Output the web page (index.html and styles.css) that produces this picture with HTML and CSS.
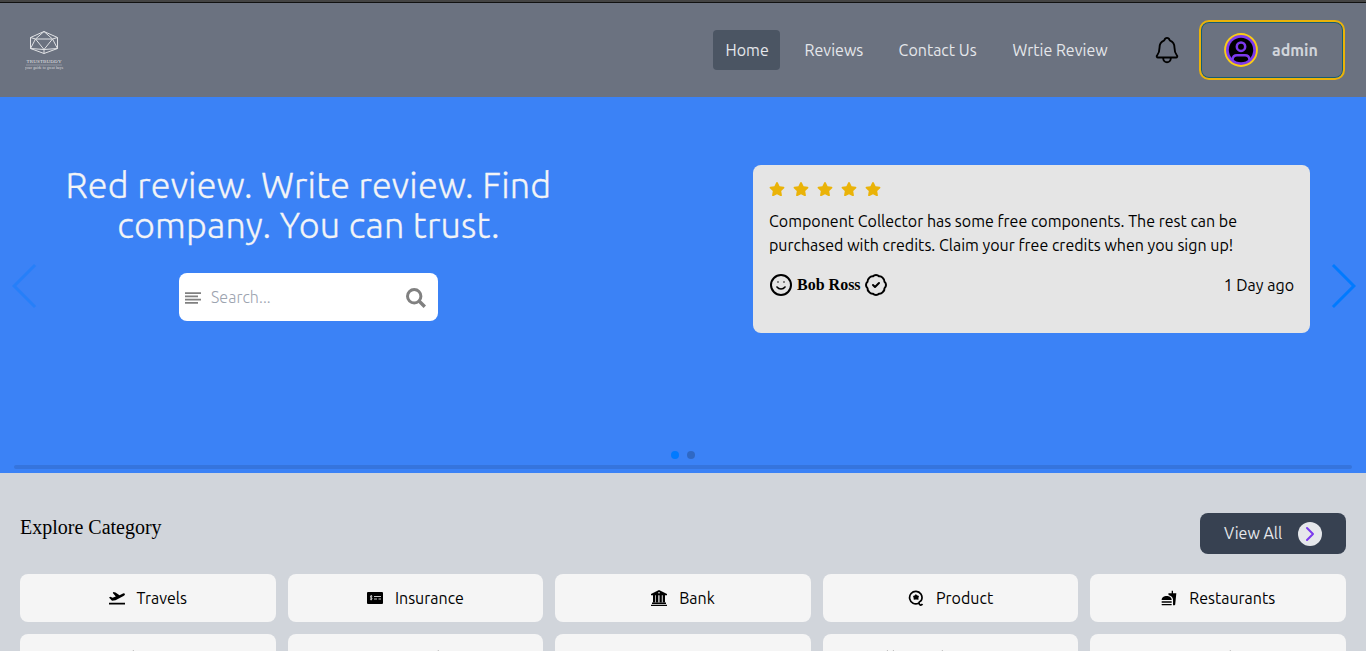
FILE: index.html
```html
<!DOCTYPE html>
<html lang="en">
<head>
<meta charset="utf-8">
<title>Trustbuddy</title>
<link rel="stylesheet" href="styles.css">
</head>
<body>
<header class="header">
  <svg class="logo" viewBox="0 0 40 42" fill="none" stroke="#fff">
    <g stroke-width="1" opacity=".8">
      <path d="M20 2.500L33.500 8.500V19.500L20 24.500L6.500 19.500V8.500Z"/>
      <path d="M11.500 10H28.500L20 20.500ZM20 2.500L11.500 10L6.500 8.500M20 2.500L28.500 10L33.500 8.500M11.500 10L6.500 19.500L20 20.500L33.500 19.500L28.500 10M20 20.500V24.500"/>
    </g>
    <path d="M2 36H38" stroke-width=".5" opacity=".5"/>
    <g fill="#fff" stroke="none" font-family="Liberation Serif, serif" text-anchor="middle" opacity=".8">
      <text class="logo-name" x="20" y="34.300" textLength="35">TRUSTBUDDY</text>
      <text class="logo-tag" x="20" y="39.500" textLength="38">your guide to great buys</text>
    </g>
  </svg>
  <nav class="nav">
    <a class="nav-item active">Home</a>
    <a class="nav-item reviews">Reviews</a>
    <a class="nav-item contact">Contact Us</a>
    <a class="nav-item write">Wrtie Review</a>
  </nav>
  <svg class="bell" viewBox="0 0 512 512" fill="none" stroke="#000" stroke-width="32" stroke-linecap="round" stroke-linejoin="round"><path d="M427.680 351.430C402 320 383.870 304 383.870 217.350 383.870 138 343.350 109.730 310 96c-4.430-1.820-8.600-6-9.950-10.550C294.200 65.540 277.800 48 256 48s-38.210 17.550-44 37.470c-1.350 4.600-5.520 8.710-9.950 10.530-33.390 13.750-73.870 41.920-73.870 121.350C128.130 304 110 320 84.320 351.430 73.680 364.450 83 384 101.610 384h308.880c18.510 0 27.770-19.610 17.190-32.570zM320 384v16a64 64 0 01-128 0v-16"/></svg>
  <button class="user">
    <svg class="avatar" viewBox="0 0 34 34" fill="none">
      <circle cx="17" cy="17" r="16.900" fill="#facc15"/>
      <circle cx="17" cy="17" r="15" fill="#7c3aed"/>
      <circle cx="17" cy="17" r="12.200" fill="#000"/>
      <circle cx="17" cy="13.700" r="4.200" stroke="#7c3aed" stroke-width="2.500"/>
      <path d="M8.500 27.500V26.500Q9 22.200 13 22.200H21Q25 22.200 25.500 26.500V27.500" stroke="#7c3aed" stroke-width="2.500"/>
    </svg>
    <span>admin</span>
  </button>
</header>

<section class="hero">
  <svg class="arrow prev" viewBox="0 0 27 44" fill="#007aff"><path d="M0,22L22,0l2.100,2.100L4.200,22l19.900,19.900L22,44L0,22Z"/></svg>
  <div class="intro">
    <h1>Red review. Write review. Find<br>company. You can trust.</h1>
    <div class="search">
      <svg class="lines" viewBox="0 0 16 12" stroke="#808080" stroke-width="1.700"><path d="M0 1.200H16M0 4.300H13M0 7.700H16M0 10.900H13"/></svg>
      <span class="placeholder">Search...</span>
      <svg class="glass" viewBox="0 0 20 20" fill="none" stroke="#808080"><circle cx="8.200" cy="8.200" r="6.700" stroke-width="3"/><path d="M12.800 12.800L18.800 18.800" stroke-width="3.400"/></svg>
    </div>
  </div>
  <article class="review">
    <div class="stars">
      <svg viewBox="0 0 576 512"><path id="star" d="M259.300 17.800L194 150.200 47.900 171.500c-26.200 3.800-36.700 36.100-17.700 54.600l105.700 103-25 145.500c-4.500 26.300 23.200 46 46.400 33.700L288 439.600l130.700 68.700c23.200 12.200 50.900-7.400 46.400-33.700l-25-145.500 105.700-103c19-18.500 8.500-50.800-17.700-54.600L382 150.200 316.700 17.800c-11.700-23.600-45.600-23.900-57.400 0z"/></svg>
      <svg viewBox="0 0 576 512"><use href="#star"/></svg>
      <svg viewBox="0 0 576 512"><use href="#star"/></svg>
      <svg viewBox="0 0 576 512"><use href="#star"/></svg>
      <svg viewBox="0 0 576 512"><use href="#star"/></svg>
    </div>
    <p>Component Collector has some free components. The rest can be<br>purchased with credits. Claim your free credits when you sign up!</p>
    <footer class="author">
      <svg viewBox="0 0 24 24" fill="none" stroke="#000" stroke-width="2" stroke-linecap="round"><circle cx="12" cy="12" r="10"/><path d="M8 14s1.500 2 4 2 4-2 4-2M9 9h.01M15 9h.01" stroke-width="1.600"/></svg>
      <strong>Bob Ross</strong>
      <svg class="verified" viewBox="0 0 24 24" fill="none" stroke="#000" stroke-width="2" stroke-linecap="round" stroke-linejoin="round"><path d="M12 2Q14 2 15 3.300Q17 3 18.800 4.900Q20.700 6.600 20.500 8.800Q22 10 22 12Q22 14 20.500 15.200Q20.700 17.400 18.800 19.100Q17 21 15 20.700Q14 22 12 22Q10 22 9 20.700Q7 21 5.200 19.100Q3.300 17.400 3.500 15.200Q2 14 2 12Q2 10 3.500 8.800Q3.300 6.600 5.200 4.900Q7 3 9 3.300Q10 2 12 2Z"/><path d="M9 12l2 2 4-4"/></svg>
      <span class="ago">1 Day ago</span>
    </footer>
  </article>
  <svg class="arrow next" viewBox="0 0 27 44" fill="#007aff"><path d="M27,22L5,44l-2.100-2.100L22.800,22L2.900,2.100L5,0L27,22Z"/></svg>
  <div class="pager"><i class="on"></i><i></i></div>
  <div class="scrollbar"></div>
</section>

<main class="categories">
  <div class="cat-head">
    <h2>Explore Category</h2>
    <button class="view-all"><span>View All</span>
      <svg viewBox="0 0 24 24" fill="none"><circle cx="12" cy="12" r="12" fill="#e5e7eb"/><path d="M9 6L15 12L9 18" stroke="#7c3aed" stroke-width="2" stroke-linecap="round" stroke-linejoin="round"/></svg>
    </button>
  </div>
  <div class="grid">
    <div class="card"><svg viewBox="0 0 16 16"><path d="M0 12.700H16V14.500H0ZM4.300 2L6.500 2.500L10.500 5.200L14 3.400Q15.600 3 16 4.200Q15.800 5.300 14.500 6L6.500 10.300L3 10.800L0 7.500L1.500 6.800L3.500 7.700L6.800 6.600L3.800 3Z"/></svg><span>Travels</span></div>
    <div class="card"><svg viewBox="0 0 16 16"><rect y="2" width="16" height="12" rx="1"/><path d="M5.300 6.300Q4 5.600 3.500 6.300Q3 7.200 4.200 7.700Q5.500 8.200 5 9.100Q4.300 9.700 3 9M4.200 5V10.300M7 6.500H14M7 9H10M11.500 9H14" fill="none" stroke="#ddd" stroke-width=".9"/></svg><span>Insurance</span></div>
    <div class="card"><svg viewBox="0 0 16 16"><path fill-rule="evenodd" d="M8 0L16 4V5.300H0V4ZM8 2A.8 .8 0 1 0 8 3.600A.8 .8 0 1 0 8 2ZM2 5.300H4.300V12.800H2ZM5 5.300H7.300V12.800H5ZM8.500 5.300H10.800V12.800H8.500ZM11.700 5.300H14V12.800H11.700ZM1 12.500H15V14H1ZM0 14.800H16V16H0Z"/></svg><span>Bank</span></div>
    <div class="card"><svg viewBox="0 0 16 16"><path d="M10.500 13.200A6.200 6.200 0 1 1 13.700 9.500C13 12 10.500 11 11 13.200C11.300 15.600 13.500 15.500 14.500 14" fill="none" stroke="#000" stroke-width="1.700"/><path d="M7.800 4L9 5.200L11 6L10.400 8L10.500 9.700L8 9.500L5.800 9.700L5.500 7.500L5 6L7 5.200Z"/></svg><span>Product</span></div>
    <div class="card"><svg viewBox="0 0 24 24"><path d="M18.060 22.990h1.660c.84 0 1.530-.64 1.630-1.460L23 5.050h-5V1h-1.970v4.050h-4.970l.3 2.340c1.710.47 3.310 1.320 4.270 2.260 1.440 1.420 2.430 2.890 2.430 5.290v8.050zM1 21.990V21h15.030v.99c0 .55-.45 1-1.010 1H2.010c-.56 0-1.010-.45-1.010-1zm15.030-7c0-8-15.030-8-15.030 0h15.030zM1.020 17h15v2h-15z"/></svg><span>Restaurants</span></div>
    <div class="card next-row"><svg class="tips" viewBox="0 0 256 1"><path d="M113 0h1v1h-1z"/></svg></div>
    <div class="card next-row"><svg class="tips" viewBox="0 0 256 1"><path d="M150 0h1v1h-1z"/></svg></div>
    <div class="card next-row"></div>
    <div class="card next-row"><svg class="tips" viewBox="0 0 256 1"><path d="M64 0h1v1h-1zM70 0h1v1h-1zM119 0h1v1h-1z"/></svg></div>
    <div class="card next-row"><svg class="tips" viewBox="0 0 256 1"><path d="M140 0h1v1h-1z"/></svg></div>
  </div>
</main>
</body>
</html>
```
FILE: styles.css
```css
* { box-sizing: border-box; }
body {
  margin: 0;
  height: 651px;
  overflow: hidden;
  background: #d1d5db;
  color: #000;
  font: 16px/24px Ubuntu, "Noto Sans", sans-serif;
}
svg { display: block; flex: none; }
button { font: inherit; border: 0; }
span, a { white-space: nowrap; }

.header {
  display: flex;
  align-items: center;
  height: 97px;
  padding: 0 21px 0 24px;
  background: #6b7280;
  border-top: 2px solid #444;
  box-shadow: inset 0 1px #111;
}
.logo { width: 40px; height: 42px; }
.logo-name { font-size: 5px; }
.logo-tag { font-size: 3.4px; }
.nav { display: flex; gap: 12px; margin-left: auto; margin-top: 1px; }
.nav-item {
  width: 67px;
  padding: 8px 0 8px 12.6px;
  border-radius: 4px;
  color: #e5e7eb;
}
.nav-item.active { background: #4b5563; }
.nav-item.reviews { width: 82px; }
.nav-item.contact { width: 102px; }
.nav-item.write { width: 120px; }
.bell { width: 30px; height: 30px; margin: 1px 17px 0 32px; }
.user {
  display: flex;
  align-items: center;
  gap: 14px;
  width: 146px;
  height: 60px;
  margin-top: 1px;
  padding: 0 0 0 23px;
  background: none;
  border: 2px solid #eab308;
  border-radius: 10px;
  box-shadow: inset 0 0 0 1px #155e75;
  color: #d1d5db;
  font-weight: 600;
}
.avatar { width: 34px; height: 34px; }

.hero {
  position: relative;
  display: flex;
  justify-content: space-between;
  height: 376px;
  padding: 68px 56px 0;
  background: #3b82f6;
}
.intro { width: 505px; text-align: center; }
h1 {
  margin: 0 0 28px;
  color: #f3f4f6;
  font-size: 36px;
  font-weight: 300;
  line-height: 40px;
  letter-spacing: .2px;
  -webkit-text-stroke: .3px #f3f4f6;
}
.search {
  display: flex;
  align-items: center;
  width: 259px;
  height: 48px;
  margin: 0 auto;
  padding: 0 12px 0 6px;
  border-radius: 8px;
  background: #fff;
}
.lines { width: 16px; height: 12px; margin-top: 2px; }
.placeholder { margin-left: 10px; color: #9ca3af; font-weight: 300; letter-spacing: .08px; }
.glass { width: 20px; height: 20px; margin: 2px 0 0 auto; }
.review {
  width: 557px;
  height: 168px;
  padding: 16px;
  border-radius: 8px;
  background: #e5e5e5;
}
.stars { display: flex; gap: 8px; height: 16px; align-items: center; fill: #eab308; }
.stars svg { width: 16px; height: 14.2px; }
.review p { margin: 12px 0 16px; white-space: nowrap; }
.author { display: flex; align-items: center; gap: 4px; }
.author svg { width: 24px; height: 24px; }
.author .verified { margin-left: -1px; }
.author strong { font: bold 16px/24px "Liberation Serif", serif; }
.ago { margin-left: auto; }
.arrow { position: absolute; top: 166.500px; width: 27px; height: 44px; }
.prev { left: 11.500px; opacity: .35; }
.next { right: 10.500px; }
.pager { position: absolute; top: 354px; left: 0; right: 0; display: flex; justify-content: center; gap: 8px; }
.pager i { width: 8px; height: 8px; border-radius: 50%; background: #000; opacity: .2; }
.pager .on { background: #007aff; opacity: 1; }
.scrollbar { position: absolute; left: 14px; right: 14px; top: 368px; height: 4px; border-radius: 4px; background: rgba(0,0,0,.1); }

.categories { padding: 40px 20px 0; }
.cat-head { display: flex; justify-content: space-between; height: 61px; }
h2 { margin: 0; font: 20px/28px "Liberation Serif", serif; }
.view-all {
  display: flex;
  align-items: center;
  justify-content: space-between;
  width: 146px;
  height: 41px;
  padding: 0 24px;
  border-radius: 8px;
  background: #374151;
  color: #e5e7eb;
}
.view-all span { margin-bottom: 1px; }
.view-all svg { width: 24px; height: 24px; }
.grid { display: grid; grid-template-columns: repeat(5, 1fr); gap: 12px; }
.card {
  display: flex;
  align-items: center;
  justify-content: center;
  gap: 12px;
  height: 48px;
  border-radius: 8px;
  background: #f5f5f5;
}
.card svg { width: 16px; height: 16px; }
.card.next-row { align-items: flex-start; padding-top: 16px; }
.card .tips { width: 100%; height: 1px; fill: #bbb; }
```
